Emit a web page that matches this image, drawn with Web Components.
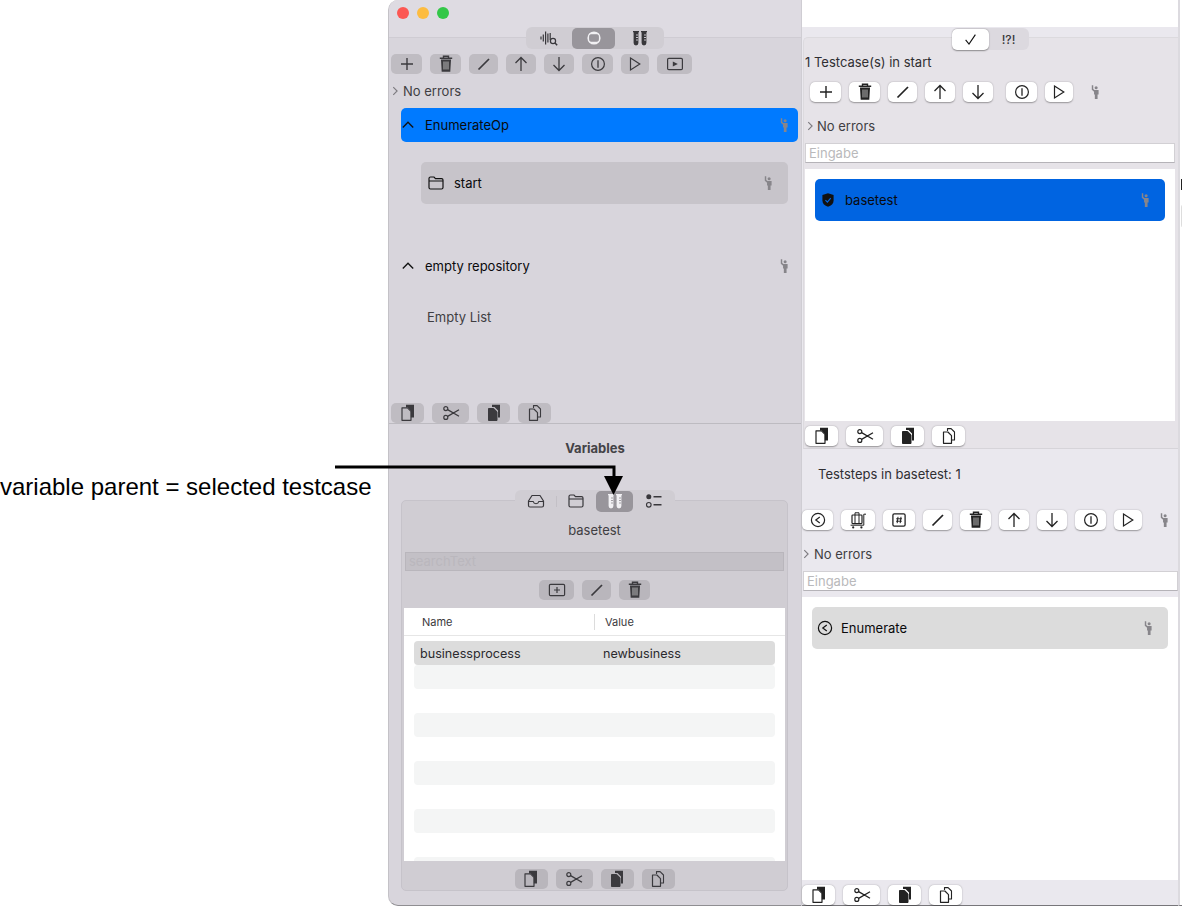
<!DOCTYPE html>
<html>
<head>
<meta charset="utf-8">
<title>Variables</title>
<style>
html,body{margin:0;padding:0;background:#fff;}
body{width:1182px;height:906px;overflow:hidden;font-family:Inter,"Liberation Sans",sans-serif;font-size:13px;color:#2b2a2e;}
</style>
</head>
<body>
<app-page></app-page>

<script>
const ICONS = {
    plus:`<path d="M10 4v12M4 10h12" fill="none" stroke="currentColor" stroke-width="1.4"/>`,
    trash:`<path d="M7.500 3.500V2.300h5v1.200M3.800 4.200h12.400" fill="none" stroke="currentColor" stroke-width="1.400"/><path d="M5 5.500h10l-.7 12.200H5.700z" fill="currentColor"/><path d="M8 7.500v8M10 7.500v8M12 7.500v8" stroke="#ddd" stroke-width=".8"/>`,
    pencil:`<path d="M4.500 15.500L15 5" fill="none" stroke="currentColor" stroke-width="1.700"/>`,
    up:`<path d="M10 17V3.500M4.500 9L10 3.500 15.500 9" fill="none" stroke="currentColor" stroke-width="1.300"/>`,
    down:`<path d="M10 3v13.500M4.500 11L10 16.500 15.500 11" fill="none" stroke="currentColor" stroke-width="1.300"/>`,
    info:`<circle cx="10" cy="10" r="6.400" fill="none" stroke="currentColor" stroke-width="1.200"/><path d="M10 6.200v7.600" stroke="currentColor" stroke-width="1.300"/>`,
    play:`<path d="M5.500 4L14.800 10 5.500 16z" fill="none" stroke="currentColor" stroke-width="1.200"/>`,
    playbox:`<rect x="2.600" y="4.400" width="14.800" height="11.200" rx="1.200" fill="none" stroke="currentColor" stroke-width="1.200"/><path d="M7.800 7.400l5 2.600-5 2.600z" fill="currentColor"/>`,
    copy:`<path d="M8 1.800h8v12.700H12.800V7.800L9.800 4.600H8z" fill="currentColor"/><path d="M4 4.800h5.500L13 8.300v9H4z" fill="none" stroke="currentColor" stroke-width="1.200" stroke-linejoin="round"/>`,
    cut:`<circle cx="4.800" cy="5.600" r="2" fill="none" stroke="currentColor" stroke-width="1.200"/><circle cx="4.800" cy="14.400" r="2" fill="none" stroke="currentColor" stroke-width="1.200"/><path d="M6.600 6.600L18 13.200M6.600 13.400L18 6.800" fill="none" stroke="currentColor" stroke-width="1.300"/>`,
    paste:`<path d="M8 1.800h8v12.700H14V7.500L10.500 4H8z" fill="currentColor"/><path d="M4.500 5.500h5.200L13 8.800V17.500H4.500z" fill="currentColor" stroke="currentColor" stroke-width="1" stroke-linejoin="round"/>`,
    dup:`<path d="M8.500 5V2.600h3.600l3.400 3.400V14H13" fill="none" stroke="currentColor" stroke-width="1.100" stroke-linejoin="round"/><path d="M4.500 6h4.400l3.600 3.600V17.300h-8z" fill="none" stroke="currentColor" stroke-width="1.200" stroke-linejoin="round"/>`,
    wave:`<path d="M2 8.500v3M4.300 6.500v7M6.600 3.500v13M8.900 5.500v9M11.200 5v7" stroke="currentColor" stroke-width="1.200"/><circle cx="14" cy="13" r="2.600" fill="none" stroke="currentColor" stroke-width="1.200"/><path d="M16 15l2.200 2.200" stroke="currentColor" stroke-width="1.500"/>`,
    stopcircle:`<circle cx="10" cy="10" r="6.600" fill="currentColor"/><rect x="5.600" y="6.800" width="8.800" height="6.400" rx="1.400" fill="#98959b" stroke="#98959b"/>`,
    tubes:`<path d="M3 3h6v1.200h-.6V15a2.400 2.400 0 0 1-4.800 0V4.200H3zM11 3h6v1.200h-.6V15a2.400 2.400 0 0 1-4.800 0V4.200H11z" fill="currentColor"/><path d="M6 7h2M6 9.500h2M6 12h2M14 7h2M14 9.500h2M14 12h2" stroke="var(--tick,#d8d5dc)" stroke-width=".9"/>`,
    folder:`<path d="M3 5.500C3 4.600 3.600 4 4.500 4H8l1.500 1.600h6c.9 0 1.500.6 1.500 1.400v7.500c0 .9-.6 1.500-1.500 1.500h-11C3.600 16 3 15.400 3 14.500z" fill="none" stroke="currentColor" stroke-width="1.200"/><path d="M3 8h14" stroke="currentColor" stroke-width="1.100"/>`,
    tray:`<path d="M6 4.500h8L17.500 10v4.500c0 .8-.6 1.500-1.500 1.500H4c-.9 0-1.500-.7-1.500-1.500V10z" fill="none" stroke="currentColor" stroke-width="1.200" stroke-linejoin="round"/><path d="M2.800 10.500h4.400c.3 1.400 1.300 2.200 2.800 2.200s2.500-.8 2.800-2.200h4.400" fill="none" stroke="currentColor" stroke-width="1.100"/>`,
    checklist:`<circle cx="4.800" cy="5.800" r="2.500" fill="currentColor"/><circle cx="4.800" cy="13.800" r="2.300" fill="none" stroke="currentColor" stroke-width="1.100"/><path d="M9.500 5.800h8M9.500 13.800h8" stroke="currentColor" stroke-width="1.400"/>`,
    shield:`<path d="M10 1.500l7 2.300v6.700c0 4-2.900 6.500-7 8-4.100-1.500-7-4-7-8V3.800z" fill="currentColor"/><path d="M6.800 10.200l2.400 2.400 4.200-5" fill="none" stroke="#0064e1" stroke-width="1.500"/>`,
    back:`<circle cx="10" cy="10" r="6.600" fill="none" stroke="currentColor" stroke-width="1.200"/><path d="M11.800 7l-4 3 4 3" fill="none" stroke="currentColor" stroke-width="1.200"/>`,
    cart:`<rect x="4" y="5" width="10" height="8.600" rx=".8" fill="none" stroke="currentColor" stroke-width="1.200"/><path d="M7 5V2.800h4V5M2.600 15.200h13.200V4.200h2.200M7 5v8.600M11 5v8.600" fill="none" stroke="currentColor" stroke-width="1"/><circle cx="5.200" cy="17.400" r="1.100" fill="currentColor"/><circle cx="13.400" cy="17.400" r="1.100" fill="currentColor"/>`,
    hash:`<rect x="3.900" y="3.900" width="12.200" height="12.200" rx="1.400" fill="none" stroke="currentColor" stroke-width="1.300"/><path d="M9 6.800L8.200 13.200M12 6.800l-.8 6.400M7.200 8.800h5.800M7 11.200h5.800" fill="none" stroke="currentColor" stroke-width="1"/>`,
    person:`<circle cx="11.400" cy="4.600" r="1.900" fill="currentColor"/><path d="M6 1.500h1.800v4.600l1.600 1.500h5.100v5.400h-1.300v5.600H9.800v-5.600H8.800v-3.300L6 7.300z" fill="currentColor"/>`,
    right:`<path d="M7.500 4.500L13 10l-5.500 5.500" fill="none" stroke="currentColor" stroke-width="1.600"/>`,
    upchev:`<path d="M3.500 13L10 6.500 16.500 13" fill="none" stroke="currentColor" stroke-width="1.700"/>`,
    check:`<path d="M3.500 10.500L8 16 16.500 3.500" fill="none" stroke="currentColor" stroke-width="1.500"/>`,
    boxplus:`<rect x="2.400" y="4.400" width="15.200" height="11.200" rx="1.200" fill="none" stroke="currentColor" stroke-width="1.200"/><path d="M10 7v6M7 10h6" stroke="currentColor" stroke-width="1.200"/>`
};

class AppIcon extends HTMLElement {
    connectedCallback(){
        const s = this.getAttribute("size") || 20;
        this.attachShadow({mode:"open"}).innerHTML = `<style>
        :host{display:inline-flex;flex:none;width:${s}px;height:${s}px;}
        svg{display:block;width:100%;height:100%;}
        </style><svg viewBox="0 0 20 20">${ICONS[this.getAttribute("name")] || ""}</svg>`;
    }
}
customElements.define("app-icon",AppIcon);

class ToolBtn extends HTMLElement {
    connectedCallback(){
        const w = this.getAttribute("w") || 30;
        const s = this.getAttribute("size") || 20;
        this.attachShadow({mode:"open"}).innerHTML = `<style>
        :host{display:flex;flex:none;width:${w}px;height:20px;align-items:center;justify-content:center;
            border-radius:5px;background:var(--btn-bg,#bfbcc2);box-shadow:var(--btn-shadow,none);color:var(--btn-fg,#3b3a3e);}
        </style><app-icon name="${this.getAttribute("icon")}" size="${s}"></app-icon>`;
    }
}
customElements.define("tool-btn",ToolBtn);

class ToolBar extends HTMLElement {
    constructor(){
        super();
        this.attachShadow({mode:"open"}).innerHTML = `<style>
        :host{display:flex;flex:none;gap:8px;align-items:center;height:20px;}
        </style><slot></slot>`;
    }
}
customElements.define("tool-bar",ToolBar);

/* the 4 clipboard buttons come back in every panel */
class ClipBar extends HTMLElement {
    constructor(){
        super();
        this.attachShadow({mode:"open"}).innerHTML = `<style>
        :host{display:flex;flex:none;gap:8px;height:20px;}
        </style>
        <tool-btn w="33" icon="copy"></tool-btn>
        <tool-btn w="37" icon="cut"></tool-btn>
        <tool-btn w="33" icon="paste"></tool-btn>
        <tool-btn w="33" icon="dup"></tool-btn>`;
    }
}
customElements.define("clip-bar",ClipBar);

class SegTabs extends HTMLElement {
    constructor(){
        super();
        this.attachShadow({mode:"open"}).innerHTML = `<style>
        :host{display:flex;flex:none;align-self:center;position:relative;z-index:1;height:22px;border-radius:6px;
            background:var(--seg-bg,#d0cdd3);align-items:center;}
        </style><slot></slot>`;
    }
}
customElements.define("seg-tabs",SegTabs);

class SegTab extends HTMLElement {
    constructor(){
        super();
        this.attachShadow({mode:"open"}).innerHTML = `<style>
        :host{display:flex;flex:none;position:relative;height:21px;align-items:center;justify-content:center;border-radius:5px;color:#38373b;font-size:12px;font-weight:500;}
        :host([on]){background:var(--seg-on,#98959b);color:var(--seg-on-fg,#f1f0f3);box-shadow:var(--seg-on-shadow,none);}
        :host([sep])::before{content:"";position:absolute;left:0;top:5px;width:1px;height:11px;background:#c3c0c6;}
        </style><slot></slot>`;
    }
    connectedCallback(){ this.style.width = this.getAttribute("w")+"px"; }
}
customElements.define("seg-tab",SegTab);

class ErrLine extends HTMLElement {
    constructor(){
        super();
        this.attachShadow({mode:"open"}).innerHTML = `<style>
        :host{display:flex;flex:none;height:16px;align-items:center;color:#3f3e42;line-height:16px;}
        app-icon{color:#7d7b80;margin-left:-3px;margin-right:var(--err-gap,1px);}
        </style><app-icon name="right" size="14"></app-icon>No errors`;
    }
}
customElements.define("err-line",ErrLine);

class TextField extends HTMLElement {
    constructor(){
        super();
        this.attachShadow({mode:"open"}).innerHTML = `<style>
        :host{display:flex;flex:none;height:20px;box-sizing:border-box;align-items:center;padding-left:3px;
            background:#fff;border:1px solid #d2d0d4;border-bottom-color:#b5b3b8;color:#b9b9bb;}
        </style><slot></slot>`;
    }
}
customElements.define("text-field",TextField);

class ListRow extends HTMLElement {
    constructor(){
        super();
        this.attachShadow({mode:"open"}).innerHTML = `<style>
        :host{display:flex;flex:none;align-items:center;box-sizing:border-box;border-radius:5px;color:#0a0a0c;}
        .label{flex:1;}
        .who{color:#87858a;}
        ::slotted(app-icon){color:#111;}
        </style><slot name="lead"></slot><span class="label"><slot></slot></span><app-icon class="who" name="person" size="16"></app-icon>`;
    }
}
customElements.define("list-row",ListRow);

class VarRow extends HTMLElement {
    constructor(){
        super();
        this.attachShadow({mode:"open"}).innerHTML = `<style>
        :host{display:flex;flex:none;height:24px;margin:0 10px;padding-left:6px;align-items:center;border-radius:4px;color:#2b2a2e;font-size:12.6px;}
        :host([kind=sel]){background:#dcdcdc;}
        :host([kind=alt]){background:#f4f5f5;}
        .a{width:183px;}
        </style><span class="a"><slot name="name"></slot></span><slot name="value"></slot>`;
    }
}
customElements.define("var-row",VarRow);

class VarTable extends HTMLElement {
    constructor(){
        super();
        this.attachShadow({mode:"open"}).innerHTML = `<style>
        :host{display:block;flex:none;height:253px;margin:8px 2px 0;background:#fff;overflow:hidden;}
        .head{display:flex;height:27px;align-items:center;border-bottom:1px solid #e6e6e6;font-size:11px;color:#3a393d;padding-left:18px;margin-bottom:5px;}
        .n{width:172px;height:16px;line-height:16px;border-right:1px solid #dcdcdc;}
        .v{padding-left:10px;}
        </style>
        <div class="head"><div class="n">Name</div><div class="v">Value</div></div>
        <slot></slot>`;
    }
}
customElements.define("var-table",VarTable);

class LeftWindow extends HTMLElement {
    constructor(){
        super();
        this.attachShadow({mode:"open"}).innerHTML = `<style>
        :host{display:flex;flex-direction:column;flex:none;width:414px;height:906px;box-sizing:border-box;
            background:#d8d5dc;border-left:1px solid #c4c2c7;border-right:1px solid #cfcdd3;border-bottom:1px solid #8f8e92;
            border-radius:10px 0 0 10px;overflow:hidden;font-size:13px;
            --btn-bg:#bfbcc2;--seg-bg:#d0cdd3;}
        .title{flex:none;height:37px;background:#dedbe2;display:flex;gap:8px;padding:7px 0 0 8px;box-sizing:border-box;}
        .dot{width:12px;height:12px;border-radius:50%;}
        .top-tabs{margin:-10px 0 -12px;}
        .box{flex:none;height:387px;box-sizing:border-box;border-top:1px solid #cfccd3;border-bottom:1px solid #bdbbc1;display:flex;flex-direction:column;}
        .box > tool-bar{margin:16px 0 0 2px;}
        .box > err-line{margin:9px 0 0 2px;}
        .sel{margin:9px 0 0 12px;width:397px;height:34px;background:#007aff;padding:0 6px 0 0;}
        .sel app-icon[name=upchev]{margin:0 9px 0 -1px;}
        .folder{margin:20px 0 0 32px;width:367px;height:42px;background:#c7c4ca;padding:0 12px 0 0;}
        .folder app-icon{margin:0 8px 0 5px;}
        .repo{margin:45px 0 0 12px;width:397px;height:34px;padding:0 6px 0 0;}
        .repo app-icon[name=upchev]{margin:0 9px 0 -1px;}
        .empty{flex:none;margin:26px 0 0 38px;height:16px;line-height:16px;color:#3f3e42;}
        .box > clip-bar{margin:auto 0 0 2px;}
        h3{flex:none;margin:16px 0 0;height:16px;line-height:16px;font-size:13px;font-weight:700;text-align:center;color:#444347;}
        .low-tabs{margin:34px 0 -12px;}
        .inner{flex:none;margin:0 0 0 12px;width:387px;height:391px;box-sizing:border-box;border:1px solid #c6c3ca;border-radius:5px;background:#d0cdd3;
            display:flex;flex-direction:column;--btn-bg:#b9b6bc;}
        .name{flex:none;text-align:center;margin-top:21px;height:16px;line-height:16px;color:#3f3e42;}
        .search{flex:none;margin:14px 3px 0;height:19px;box-sizing:border-box;background:#c3c0c6;border:1px solid #b9b6bc;color:#bab7bd;padding-left:3px;line-height:17px;}
        .mid{align-self:center;margin-top:9px;}
        .foot{align-self:center;margin-top:8px;}
        </style>
        <div class="title">
            <div class="dot" style="background:#fc5753"></div>
            <div class="dot" style="background:#fdbc40"></div>
            <div class="dot" style="background:#33c748"></div>
        </div>
        <seg-tabs class="top-tabs">
            <seg-tab w="46"><app-icon name="wave"></app-icon></seg-tab>
            <seg-tab w="43" on><app-icon name="stopcircle"></app-icon></seg-tab>
            <seg-tab w="49"><app-icon name="tubes"></app-icon></seg-tab>
        </seg-tabs>
        <div class="box">
            <tool-bar>
                <tool-btn w="31" icon="plus"></tool-btn>
                <tool-btn w="31" icon="trash"></tool-btn>
                <tool-btn w="29" icon="pencil"></tool-btn>
                <tool-btn w="30" icon="up"></tool-btn>
                <tool-btn w="30" icon="down"></tool-btn>
                <tool-btn w="31" icon="info"></tool-btn>
                <tool-btn w="28" icon="play"></tool-btn>
                <tool-btn w="35" icon="playbox"></tool-btn>
            </tool-bar>
            <err-line></err-line>
            <list-row class="sel"><app-icon slot="lead" name="upchev" size="16"></app-icon>EnumerateOp</list-row>
            <list-row class="folder"><app-icon slot="lead" name="folder"></app-icon>start</list-row>
            <list-row class="repo"><app-icon slot="lead" name="upchev" size="16"></app-icon>empty repository</list-row>
            <div class="empty">Empty List</div>
            <clip-bar></clip-bar>
        </div>
        <h3>Variables</h3>
        <seg-tabs class="low-tabs">
            <seg-tab w="41"><app-icon name="tray"></app-icon></seg-tab>
            <seg-tab w="40" sep><app-icon name="folder"></app-icon></seg-tab>
            <seg-tab w="37" on style="--tick:#98959b"><app-icon name="tubes"></app-icon></seg-tab>
            <seg-tab w="42"><app-icon name="checklist"></app-icon></seg-tab>
        </seg-tabs>
        <div class="inner">
            <div class="name">basetest</div>
            <div class="search">searchText</div>
            <tool-bar class="mid">
                <tool-btn w="35" icon="boxplus"></tool-btn>
                <tool-btn w="29" icon="pencil"></tool-btn>
                <tool-btn w="31" icon="trash"></tool-btn>
            </tool-bar>
            <var-table>
                <var-row kind="sel"><span slot="name">businessprocess</span><span slot="value">newbusiness</span></var-row>
                <var-row kind="alt"></var-row>
                <var-row></var-row>
                <var-row kind="alt"></var-row>
                <var-row></var-row>
                <var-row kind="alt"></var-row>
                <var-row></var-row>
                <var-row kind="alt"></var-row>
                <var-row></var-row>
                <var-row kind="alt"></var-row>
            </var-table>
            <clip-bar class="foot"></clip-bar>
        </div>`;
    }
}
customElements.define("left-window",LeftWindow);

class RightWindow extends HTMLElement {
    constructor(){
        super();
        this.attachShadow({mode:"open"}).innerHTML = `<style>
        :host{display:flex;flex-direction:column;flex:none;width:376px;height:906px;background:#fff;font-size:13px;
            --btn-bg:#fff;--btn-shadow:0 0.5px 1.5px rgba(0,0,0,.35);--btn-fg:#222;
            --seg-bg:#dcd9df;--seg-on:#fff;--seg-on-fg:#111;--seg-on-shadow:0 0.5px 1.5px rgba(0,0,0,.4);}
        .space{flex:none;height:27px;}
        .pane{flex:1;min-height:0;box-sizing:border-box;background:#eae8ee;border-bottom:1px solid #77767a;display:flex;flex-direction:column;}
        seg-tabs{margin:1px 0 -13px;}
        .box{flex:none;height:412px;box-sizing:border-box;margin-left:1px;background:#e6e3e8;border-top:1px solid #dcdade;border-left:1px solid #dcdade;border-bottom:1px solid #d6d4d9;border-radius:5px 0 0 0;display:flex;flex-direction:column;}
        .count{flex:none;margin:16px 0 0 1px;height:16px;line-height:16px;color:#2f2e32;}
        .box > tool-bar{margin:12px 0 0 6px;}
        .info{margin-left:5px;}
        .who{color:#87858a;margin-left:6px;}
        .box > err-line{margin:16px 0 0 2px;--err-gap:0px;}
        .box > text-field{margin:9px 3px 0 1px;}
        .list{flex:none;background:#fff;}
        .l1{height:252px;margin:6px 3px 0 1px;padding:10px 10px 0;box-sizing:border-box;}
        .blue{height:42px;background:#0064e1;padding-right:12px;}
        .blue app-icon[name=shield]{margin:0 9px 0 5px;}
        .box > clip-bar{margin:5px 0 0 1px;}
        .steps{flex:none;margin:17px 0 0 16px;height:16px;line-height:16px;color:#2f2e32;}
        .pane > tool-bar{margin:28px 0 0 0;}
        .pane > err-line{margin:16px 0 0 0;}
        .pane > text-field{margin:9px 0 0 1px;}
        .l2{flex:1;min-height:0;margin-top:6px;padding:10px 10px 0;box-sizing:border-box;}
        .grey{height:42px;background:#dcdcdc;padding-right:12px;}
        .grey app-icon[name=back]{margin:0 6px 0 3px;color:#111;}
        .pane > clip-bar{margin:5px 0 0 0;}
        </style>
        <div class="space"></div>
        <div class="pane">
            <seg-tabs>
                <seg-tab w="37" on><app-icon name="check" size="15"></app-icon></seg-tab>
                <seg-tab w="40">!?!</seg-tab>
            </seg-tabs>
            <div class="box">
                <div class="count">1 Testcase(s) in start</div>
                <tool-bar>
                    <tool-btn w="31" icon="plus"></tool-btn>
                    <tool-btn w="31" icon="trash"></tool-btn>
                    <tool-btn w="29" icon="pencil"></tool-btn>
                    <tool-btn w="30" icon="up"></tool-btn>
                    <tool-btn w="30" icon="down"></tool-btn>
                    <tool-btn class="info" w="31" icon="info"></tool-btn>
                    <tool-btn w="28" icon="play"></tool-btn>
                    <app-icon class="who" name="person" size="16"></app-icon>
                </tool-bar>
                <err-line></err-line>
                <text-field>Eingabe</text-field>
                <div class="list l1">
                    <list-row class="blue"><app-icon slot="lead" name="shield" size="16"></app-icon>basetest</list-row>
                </div>
                <clip-bar></clip-bar>
            </div>
            <div class="steps">Teststeps in basetest: 1</div>
            <tool-bar>
                <tool-btn w="31" icon="back"></tool-btn>
                <tool-btn w="34" icon="cart"></tool-btn>
                <tool-btn w="32" icon="hash"></tool-btn>
                <tool-btn w="29" icon="pencil"></tool-btn>
                <tool-btn w="31" icon="trash"></tool-btn>
                <tool-btn w="30" icon="up"></tool-btn>
                <tool-btn w="30" icon="down"></tool-btn>
                <tool-btn w="31" icon="info"></tool-btn>
                <tool-btn w="28" icon="play"></tool-btn>
                <app-icon class="who" name="person" size="16"></app-icon>
            </tool-bar>
            <err-line></err-line>
            <text-field>Eingabe</text-field>
            <div class="list l2">
                <list-row class="grey"><app-icon slot="lead" name="back"></app-icon>Enumerate</list-row>
            </div>
            <clip-bar></clip-bar>
        </div>`;
    }
}
customElements.define("right-window",RightWindow);

/* annotation lies over the windows, free placed */
class CallOut extends HTMLElement {
    constructor(){
        super();
        this.attachShadow({mode:"open"}).innerHTML = `<style>
        :host{position:absolute;left:0;top:0;z-index:5;pointer-events:none;}
        .txt{position:absolute;left:0;top:474px;white-space:nowrap;font:24px/26px "Liberation Sans",sans-serif;color:#000;}
        svg{position:absolute;left:0;top:0;}
        </style>
        <div class="txt"><slot></slot></div>
        <svg width="700" height="520" viewBox="0 0 700 520">
            <path d="M335 467H614V478" fill="none" stroke="#000" stroke-width="3"/>
            <path d="M604 476h19l-9.500 19z" fill="#000"/>
        </svg>`;
    }
}
customElements.define("call-out",CallOut);

class AppPage extends HTMLElement {
    constructor(){
        super();
        this.attachShadow({mode:"open"}).innerHTML = `<style>
        :host{display:flex;position:relative;width:1182px;height:906px;overflow:hidden;background:#fff;}
        .gutter{flex:none;width:388px;}
        .rest{flex:none;width:4px;height:905px;border-left:2px solid #dcdadf;border-bottom:1px solid #77767a;display:flex;flex-direction:column;}
        .mark{flex:none;margin:179px 0 0 1px;width:1px;height:11px;background:#222;}
        .edge{flex:none;margin:15px 0 0 1px;width:1px;height:20px;border:1px solid #ddd;border-right:0;border-radius:4px 0 0 4px;}
        </style>
        <div class="gutter"></div>
        <left-window></left-window>
        <right-window></right-window>
        <div class="rest"><div class="mark"></div><div class="edge"></div></div>
        <call-out>variable parent = selected testcase</call-out>`;
    }
}
customElements.define("app-page",AppPage);
</script>
</body>
</html>
